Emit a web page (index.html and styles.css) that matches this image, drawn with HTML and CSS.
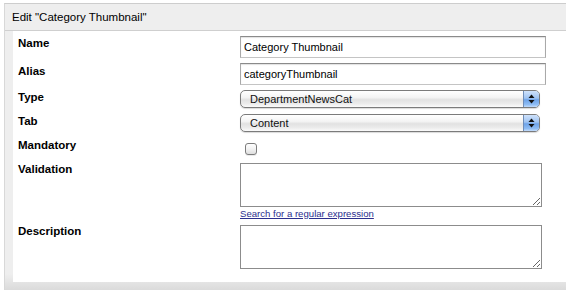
FILE: index.html
```html
<!DOCTYPE html>
<html>
<head>
<meta charset="utf-8">
<link rel="stylesheet" href="styles.css">
</head>
<body>
<div class="panel">
  <div class="panel-head">Edit "Category Thumbnail"</div>
  <div class="panel-body">
    <div class="row row-name">
      <label class="lbl">Name</label>
      <div class="ctl"><input class="txt" type="text" value="Category Thumbnail"></div>
    </div>
    <div class="row row-alias">
      <label class="lbl">Alias</label>
      <div class="ctl"><input class="txt" type="text" value="categoryThumbnail"></div>
    </div>
    <div class="row row-type">
      <label class="lbl">Type</label>
      <div class="ctl">
        <div class="popup"><span class="popup-text">DepartmentNewsCat</span><span class="popup-cap"><svg width="7" height="10" viewBox="0 0 7 10"><path d="M3.5 0.5 L6.5 4 L0.5 4 Z" fill="#111"/><path d="M3.5 9.5 L6.5 6 L0.5 6 Z" fill="#111"/></svg></span></div>
      </div>
    </div>
    <div class="row row-tab">
      <label class="lbl">Tab</label>
      <div class="ctl">
        <div class="popup"><span class="popup-text">Content</span><span class="popup-cap"><svg width="7" height="10" viewBox="0 0 7 10"><path d="M3.5 0.5 L6.5 4 L0.5 4 Z" fill="#111"/><path d="M3.5 9.5 L6.5 6 L0.5 6 Z" fill="#111"/></svg></span></div>
      </div>
    </div>
    <div class="row row-mand">
      <label class="lbl">Mandatory</label>
      <div class="ctl"><input class="chk" type="checkbox"></div>
    </div>
    <div class="row row-valid">
      <label class="lbl">Validation</label>
      <div class="ctl">
        <textarea class="area"></textarea>
        <a class="regex" href="#">Search for a regular expression</a>
      </div>
    </div>
    <div class="row row-desc">
      <label class="lbl">Description</label>
      <div class="ctl"><textarea class="area"></textarea></div>
    </div>
  </div>
</div>
</body>
</html>
```

FILE: styles.css
```css
html, body {
  margin: 0;
  padding: 0;
  background: #ffffff;
  overflow: hidden;
}

body {
  font-family: "Liberation Sans", Arial, sans-serif;
  color: #000;
}

.panel {
  margin: 3px 0 0 4px;
  border-top: 1px solid #cdcdcd;
  border-left: 1px solid #d8d8d8;
  padding: 0 0 8px 8px;
  background: linear-gradient(to bottom, #eeeeee 0, #eeeeee 270px, #d9d9d9 287px);
}

.panel-head {
  height: 26px;
  line-height: 26px;
  font-size: 11.5px;
  border-bottom: 1px solid #cfcfcf;
  margin-left: -8px;
  padding-left: 7px;
}

.panel-body {
  background: #ffffff;
  padding: 5px 0 13px 5px;
}

.row {
  display: grid;
  grid-template-columns: 222px 1fr;
  align-items: start;
}

.lbl {
  font-weight: bold;
  font-size: 11.5px;
  line-height: 14px;
  display: block;
}

.row-name { margin-bottom: 5px; }
.row-alias { margin-bottom: 5px; }
.row-alias .lbl { padding-top: 1px; }
.row-type { margin-bottom: 6px; }
.row-tab { margin-bottom: 6px; }
.row-mand { margin-bottom: 8px; }
.row-valid { margin-bottom: 5px; }
.row-valid .lbl, .row-desc .lbl { margin-top: -1px; }

.ctl {
  display: flex;
  flex-direction: column;
  align-items: flex-start;
}

.txt {
  box-sizing: border-box;
  width: 306px;
  height: 22px;
  margin: 0;
  padding: 0 3px;
  font-family: "Liberation Sans", Arial, sans-serif;
  font-size: 11px;
  color: #000;
  border: 1px solid #a9a9a9;
  border-top-color: #8a8a8a;
  border-bottom-color: #c4c4c4;
  box-shadow: inset 0 1px 1px rgba(0, 0, 0, 0.12);
  outline: none;
}

.popup {
  box-sizing: border-box;
  width: 300px;
  height: 18px;
  display: flex;
  align-items: stretch;
  border: 1px solid #7b7b7b;
  border-radius: 5px;
  overflow: hidden;
  background: linear-gradient(to bottom, #ffffff 0%, #f4f4f4 40%, #e2e2e2 55%, #ececec 80%, #fbfbfb 100%);
  box-shadow: 0 1px 1px rgba(0, 0, 0, 0.15);
}

.popup-text {
  flex: 1;
  font-size: 11px;
  line-height: 16px;
  padding-left: 9px;
  color: #111;
}

.popup-cap {
  width: 15px;
  display: flex;
  align-items: center;
  justify-content: center;
  border-left: 1px solid #6f8db8;
  background: linear-gradient(to bottom, #cfe2fb 0%, #9fc3f1 45%, #6ea3e8 55%, #8fbdf4 85%, #c3dcfb 100%);
}

.chk {
  -webkit-appearance: none;
  appearance: none;
  box-sizing: border-box;
  width: 12px;
  height: 12px;
  margin: 5px 0 0 5px;
  border: 1px solid #7c7c7c;
  border-radius: 3px;
  background: linear-gradient(to bottom, #ffffff 0%, #f2f2f2 50%, #dedede 100%);
  box-shadow: 0 1px 0 rgba(0, 0, 0, 0.08);
}

.area {
  box-sizing: border-box;
  width: 302px;
  height: 44px;
  margin: 0;
  padding: 2px;
  border: 1px solid #8c8c8c;
  font-family: "Liberation Sans", Arial, sans-serif;
  font-size: 11px;
  outline: none;
  resize: both;
}

.regex {
  font-size: 9.6px;
  line-height: 12px;
  margin-top: 1px;
  color: #2b2f8e;
  text-decoration: underline;
}
```
